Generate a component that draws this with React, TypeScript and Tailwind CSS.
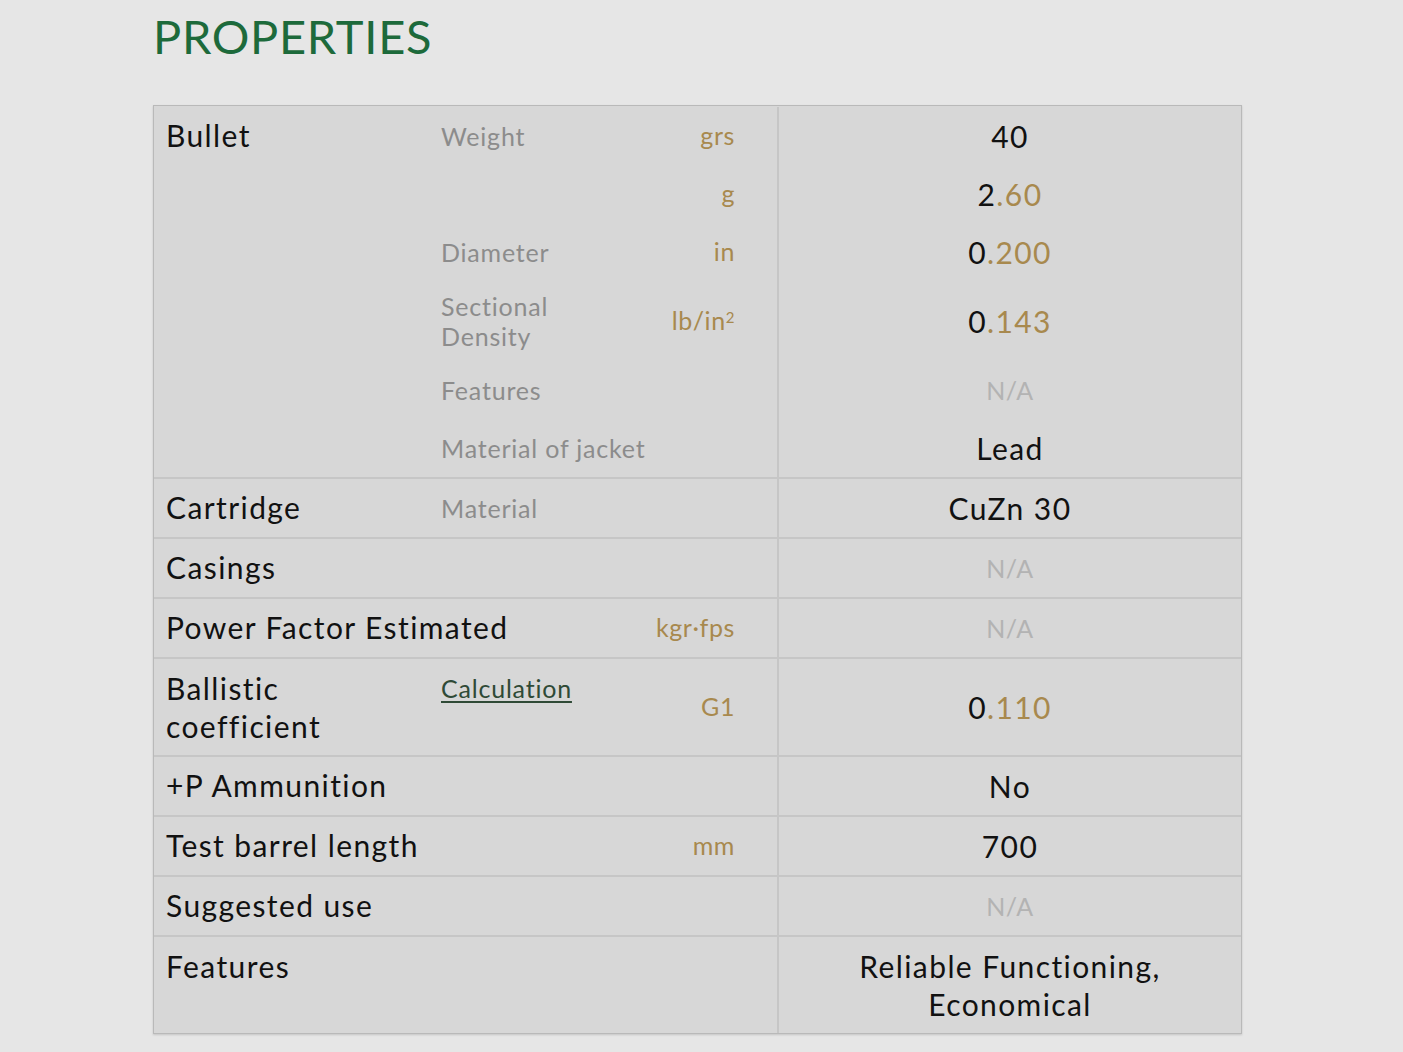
import React from "react";

const F = { fontFamily: "Lato, 'Noto Sans', sans-serif" };

function Num({ i, d }: { i: string; d: string }) {
  return (
    <span>
      <span className="text-[#111]">{i}</span>
      <span className="text-[#a8894e]">{d}</span>
    </span>
  );
}

function NA() {
  return <span className="text-[#b3b3b3] text-[25px] tracking-[0.6px]">N/A</span>;
}

type Sub = { sub?: React.ReactNode; unit?: React.ReactNode; value: React.ReactNode; h: string };

function Row({
  label,
  subs,
  labelTop,
  last,
}: {
  label: React.ReactNode;
  subs: Sub[];
  labelTop?: boolean;
  last?: boolean;
}) {
  return (
    <div className={`flex ${last ? "" : "border-b-2 border-[#c6c6c6]"}`}>
      <div className="w-[286px] shrink-0 pl-[12px] relative">
        <div
          className={`text-[30px] leading-[38px] tracking-[1.4px] text-[#111] whitespace-nowrap ${
            labelTop ? "pt-[10px]" : "h-full flex items-center pb-[3px]"
          }`}
        >
          {label}
        </div>
      </div>
      <div className="flex-1 flex flex-col">
        {subs.map((s, i) => (
          <div key={i} className={`flex ${s.h}`}>
            <div className="w-[220px] shrink-0 flex items-center pl-[1px] text-[25px] leading-[30px] tracking-[0.8px] text-[#8c8c8c] whitespace-nowrap">
              {s.sub}
            </div>
            <div className="w-[117px] shrink-0 flex items-center justify-end pr-[42px] text-[25px] tracking-[0.6px] text-[#a8894e] whitespace-nowrap">
              {s.unit}
            </div>
            <div className="flex-1 border-l-2 border-[#c6c6c6] flex items-center justify-center text-center text-[30px] leading-[38px] tracking-[1.4px] text-[#111]">
              {s.value}
            </div>
          </div>
        ))}
      </div>
    </div>
  );
}

export default function App() {
  return (
    <div className="min-h-[1052px] bg-[#e6e6e6] pl-[153px]" style={F}>
      <h1 className="text-[47px] leading-none text-[#1d6a3b] pt-[13px] tracking-[0.7px]">PROPERTIES</h1>
      <div className="mt-[45px] w-[1089px] border border-[#b9b9b9] bg-[#d7d7d7] shadow-[0_1px_2px_rgba(0,0,0,0.15)]">
        <Row
          label="Bullet"
          labelTop
          subs={[
            { sub: "Weight", unit: "grs", value: "40", h: "h-[58px] mt-[1px]" },
            { unit: "g", value: <Num i="2" d=".60" />, h: "h-[58px]" },
            { sub: "Diameter", unit: "in", value: <Num i="0" d=".200" />, h: "h-[58px]" },
            {
              sub: (
                <span>
                  Sectional
                  <br />
                  Density
                </span>
              ),
              unit: (
                <span>
                  lb/in<sup className="text-[15px]">2</sup>
                </span>
              ),
              value: <Num i="0" d=".143" />,
              h: "h-[80px]",
            },
            { sub: "Features", value: <NA />, h: "h-[58px]" },
            { sub: "Material of jacket", value: "Lead", h: "h-[58px]" },
          ]}
        />
        <Row label="Cartridge" subs={[{ sub: "Material", value: "CuZn 30", h: "h-[58px]" }]} />
        <Row label="Casings" subs={[{ value: <NA />, h: "h-[58px]" }]} />
        <Row label="Power Factor Estimated" subs={[{ unit: "kgr·fps", value: <NA />, h: "h-[58px]" }]} />
        <div className="flex border-b-2 border-[#c6c6c6] h-[98px]">
          <div className="w-[286px] shrink-0 pl-[12px] flex items-center text-[30px] leading-[38px] tracking-[1.4px] text-[#111]">
            <span>
              Ballistic
              <br />
              coefficient
            </span>
          </div>
          <div className="w-[220px] shrink-0 pl-[1px] pt-[14px] text-[25px] leading-[30px] tracking-[0.8px]">
            <a className="text-[#2f4a36] underline underline-offset-[3px]">Calculation</a>
          </div>
          <div className="w-[117px] shrink-0 flex items-center justify-end pr-[42px] text-[25px] tracking-[0.6px] text-[#a8894e]">G1</div>
          <div className="flex-1 border-l-2 border-[#c6c6c6] flex items-center justify-center text-[30px] tracking-[1.4px]">
            <Num i="0" d=".110" />
          </div>
        </div>
        <Row label="+P Ammunition" subs={[{ value: "No", h: "h-[58px]" }]} />
        <Row label="Test barrel length" subs={[{ unit: "mm", value: "700", h: "h-[58px]" }]} />
        <Row label="Suggested use" subs={[{ value: <NA />, h: "h-[58px]" }]} />
        <Row
          label="Features"
          labelTop
          last
          subs={[
            {
              value: (
                <span>
                  Reliable Functioning,
                  <br />
                  Economical
                </span>
              ),
              h: "h-[96px]",
            },
          ]}
        />
      </div>
    </div>
  );
}
